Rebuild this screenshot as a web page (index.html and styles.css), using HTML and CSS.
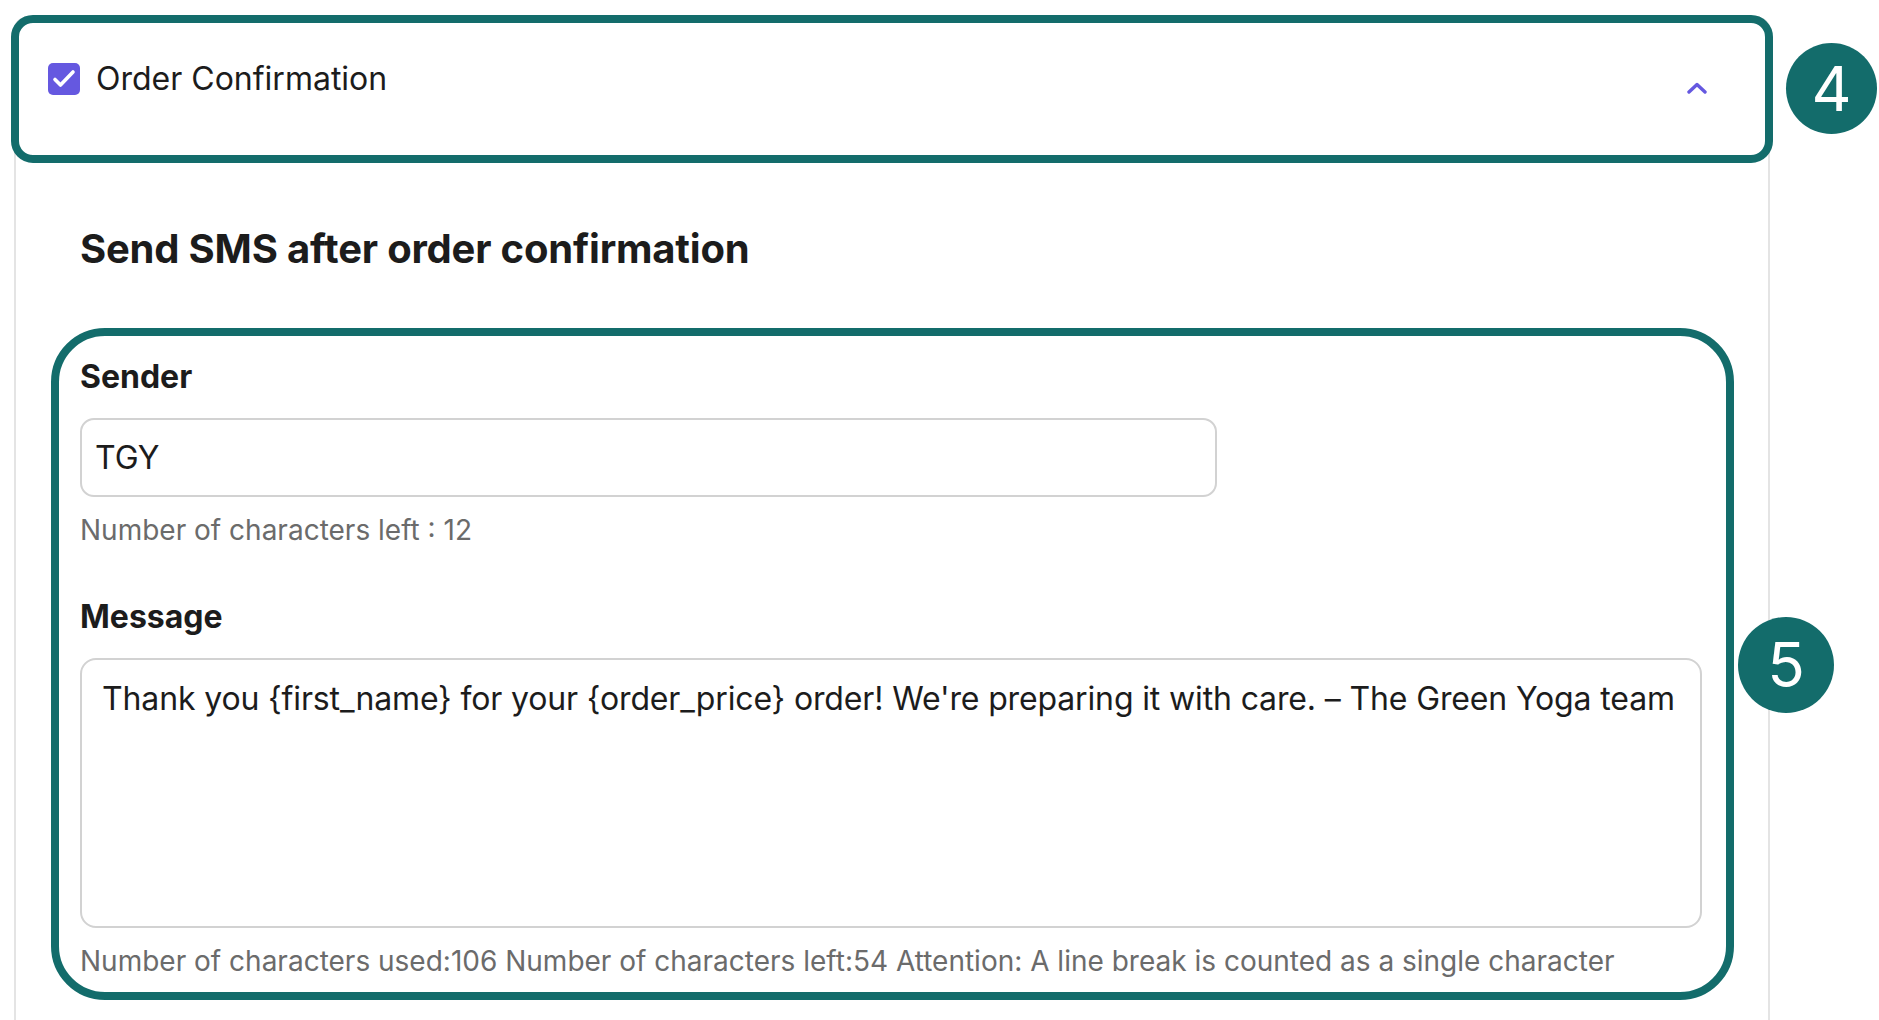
FILE: index.html
```html
<!DOCTYPE html>
<html lang="en">
<head>
<meta charset="utf-8">
<title>Order Confirmation SMS</title>
<link rel="stylesheet" href="styles.css">
</head>
<body>
<div class="page">
  <section class="card">
    <header class="acc-header">
      <span class="checkbox">
        <svg width="32" height="32" viewBox="0 0 32 32"><path d="M7 16.5 L12.5 22 L25 9" fill="none" stroke="#fff" stroke-width="3.6" stroke-linecap="round" stroke-linejoin="round"/></svg>
      </span>
      <span class="acc-title">Order Confirmation</span>
      <svg class="chevron" width="20" height="12" viewBox="0 0 20 12"><path d="M2 10 L10 2.5 L18 10" fill="none" stroke="#6558e0" stroke-width="3.4" stroke-linecap="round" stroke-linejoin="round"/></svg>
    </header>
    <div class="acc-body">
      <h2 class="title">Send SMS after order confirmation</h2>
      <div class="fields">
        <label class="label" for="sender">Sender</label>
        <input id="sender" class="input" type="text" value="TGY">
        <p class="hint">Number of characters left : 12</p>
        <label class="label label-msg" for="message">Message</label>
        <textarea id="message" class="textarea" wrap="off">Thank you {first_name} for your {order_price} order! We're preparing it with care. – The Green Yoga team</textarea>
        <p class="hint hint-foot">Number of characters used:106 Number of characters left:54 Attention: A line break is counted as a single character</p>
      </div>
    </div>
  </section>

  <div class="mark mark-4"></div>
  <div class="mark mark-5"></div>
  <div class="badge badge-4">4</div>
  <div class="badge badge-5">5</div>
</div>
</body>
</html>
```

FILE: styles.css
```css
* { box-sizing: border-box; }

html, body {
  margin: 0;
  padding: 0;
  background: #ffffff;
}

body {
  font-family: Inter, "Noto Sans", sans-serif;
  color: #1c1c1c;
  overflow: hidden;
}

.page {
  position: relative;
  width: 1879px;
  height: 1020px;
  overflow: hidden;
}

.card {
  margin: 17px 0 0 14px;
  width: 1756px;
  border: 2px solid #e4e4e4;
  border-radius: 12px;
  padding-bottom: 120px;
}

.acc-header {
  display: flex;
  align-items: center;
  height: 141px;
  padding: 0 61px 21px 32px;
}

.checkbox {
  width: 32px;
  height: 32px;
  border-radius: 5px;
  background: #6558e0;
  display: flex;
  align-items: center;
  justify-content: center;
  flex: none;
}

.checkbox svg { display: block; }

.acc-title {
  margin-left: 16px;
  font-size: 32px;
  line-height: 40px;
  font-weight: 400;
  color: #1c1c1c;
  flex: 1;
}

.chevron {
  display: block;
  margin-top: 18px;
  flex: none;
}

.acc-body {
  padding: 65px 66px 0 64px;
}

.title {
  margin: 0;
  font-size: 40px;
  line-height: 48px;
  font-weight: 700;
  color: #1c1c1c;
  letter-spacing: -0.2px;
}

.fields {
  display: flex;
  flex-direction: column;
  padding-top: 86px;
}

.label {
  display: block;
  font-size: 32px;
  line-height: 36px;
  font-weight: 700;
  color: #1c1c1c;
}

.input {
  margin-top: 23px;
  width: 1137px;
  height: 79px;
  border: 2px solid #d2d2d2;
  border-radius: 14px;
  padding: 0 13px;
  font-family: Inter, "Noto Sans", sans-serif;
  font-size: 32px;
  color: #1c1c1c;
  background: #fff;
  outline: none;
}

.hint {
  margin: 16px 0 0;
  font-size: 28px;
  line-height: 34px;
  color: #6b6b6b;
}

.label-msg {
  margin-top: 52px;
}

.textarea {
  margin-top: 23px;
  width: 100%;
  height: 270px;
  border: 2px solid #d2d2d2;
  border-radius: 16px;
  padding: 15px 20px;
  font-family: Inter, "Noto Sans", sans-serif;
  font-size: 32px;
  line-height: 48px;
  letter-spacing: -0.14px;
  color: #1c1c1c;
  background: #fff;
  resize: none;
  overflow: hidden;
  outline: none;
}

.hint-foot {
  margin-top: 16px;
  white-space: nowrap;
}

/* annotation overlays */
.mark {
  position: absolute;
  border: 8px solid #136c6b;
  pointer-events: none;
}

.mark-4 {
  left: 11px;
  top: 15px;
  width: 1762px;
  height: 148px;
  border-radius: 22px;
}

.mark-5 {
  left: 51px;
  top: 328px;
  width: 1683px;
  height: 672px;
  border-radius: 54px;
}

.badge {
  position: absolute;
  border-radius: 50%;
  background: #136c6b;
  color: #ffffff;
  display: flex;
  align-items: center;
  justify-content: center;
  font-family: Inter, "Noto Sans", sans-serif;
  font-size: 62px;
  font-weight: 400;
  line-height: 1;
}

.badge-4 {
  left: 1786px;
  top: 43px;
  width: 91px;
  height: 91px;
}

.badge-5 {
  left: 1738px;
  top: 617px;
  width: 96px;
  height: 96px;
}
```
